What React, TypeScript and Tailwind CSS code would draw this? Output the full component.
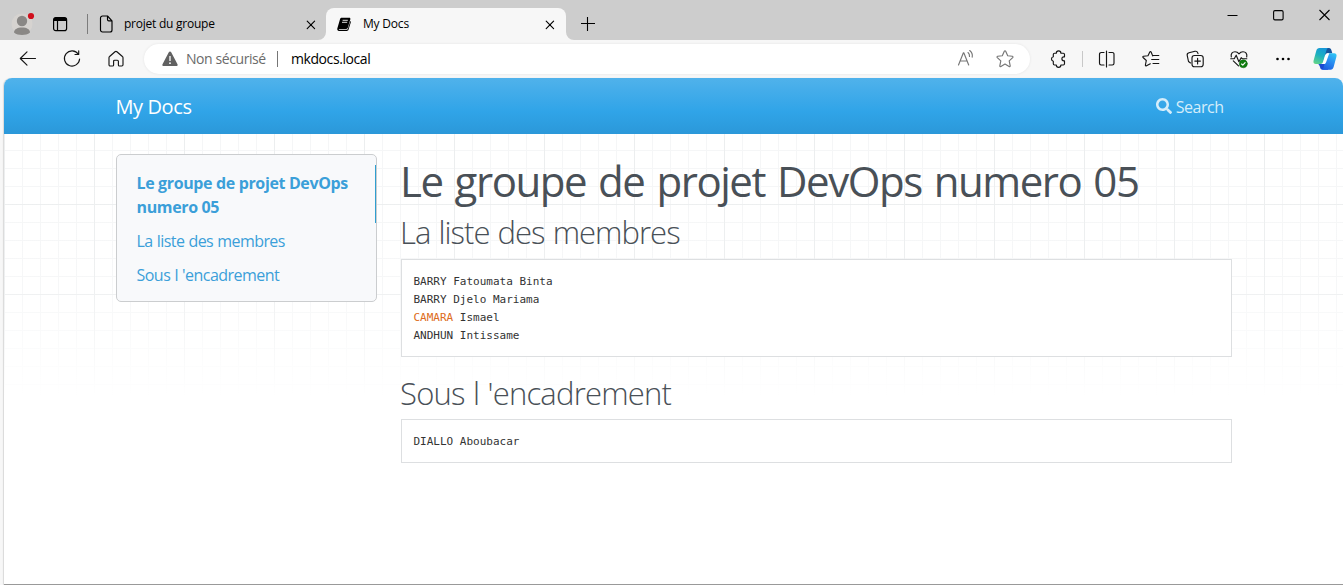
import React from "react";
import { FaSearch } from "react-icons/fa";

type IconProps = { className?: string; children: React.ReactNode; size?: number };

function Stroke({ className = "", children, size = 20 }: IconProps) {
  return (
    <svg
      width={size}
      height={size}
      viewBox={`0 0 ${size} ${size}`}
      fill="none"
      stroke="currentColor"
      strokeWidth="1.15"
      strokeLinecap="round"
      strokeLinejoin="round"
      className={`block shrink-0 ${className}`}
    >
      {children}
    </svg>
  );
}

const CloseIcon = ({ className = "" }: { className?: string }) => (
  <Stroke size={10} className={className}>
    <path d="M1.200 1.200l7.400 7.400M8.600 1.200L1.200 8.600" />
  </Stroke>
);

function TitleBar() {
  return (
    <header className="flex h-10 shrink-0 bg-[#cdcdcd]">
      <svg width="24" height="24" viewBox="0 0 24 24" className="ml-[11px] mt-3 block shrink-0">
        <circle cx="11" cy="12" r="10.5" fill="#d6d3d0" />
        <circle cx="11" cy="9" r="5.2" fill="#8a8886" />
        <path d="M3 20.5c0-3 3-5 8-5s8 2 8 5c-2 1.800-5 2.500-8 2.500s-6-.7-8-2.500z" fill="#8a8886" />
        <circle cx="20" cy="4" r="3.100" fill="#d00f1c" />
      </svg>
      <svg width="16" height="16" viewBox="0 0 16 16" className="ml-[17px] mt-4 block shrink-0">
        <rect x="1.600" y="1.600" width="13" height="13" rx="2.200" fill="none" stroke="#000" strokeWidth="1.200" />
        <path d="M1.500 5V3.500a2 2 0 0 1 2-2h9a2 2 0 0 1 2 2V5z" fill="#000" />
        <path d="M5.500 5v9.500" stroke="#000" strokeWidth="1.200" />
      </svg>
      <div className="ml-[19px] mt-[14px] h-5 w-px shrink-0 bg-[#7c7c7c]" />
      <div className="flex h-full w-[238px] shrink-0 items-start">
        <svg width="14" height="18" viewBox="0 0 14 18" fill="none" stroke="#000" strokeWidth="1.150" strokeLinejoin="round" className="ml-[11px] mt-[15px] block shrink-0">
          <path d="M1.500 3a2 2 0 0 1 2-2h5L13 5.800V15a2 2 0 0 1-2 2H3.500a2 2 0 0 1-2-2z" />
          <path d="M8.500 1v3.500a1.300 1.300 0 0 0 1.300 1.300H13" />
        </svg>
        <span className="ml-[11px] mt-[15px] w-[182px] whitespace-nowrap text-[12px] leading-[18px] tracking-[-0.24px] text-black">projet du groupe</span>
        <CloseIcon className="mt-[20px]" />
      </div>
      <div className="relative mt-2 flex h-8 w-[240px] shrink-0 items-start rounded-t-lg bg-[#f7f7f7]">
        <svg width="8" height="8" viewBox="0 0 8 8" className="absolute -left-2 bottom-0 block">
          <path d="M8 0v8H0a8 8 0 0 0 8-8z" fill="#f7f7f7" />
        </svg>
        <svg width="8" height="8" viewBox="0 0 8 8" className="absolute -right-2 bottom-0 block">
          <path d="M0 0v8h8a8 8 0 0 1-8-8z" fill="#f7f7f7" />
        </svg>
        <svg width="14" height="14" viewBox="0 0 14 14" className="ml-[11px] mt-[9px] block shrink-0">
          <path d="M4.800.8h7.400c1 0 1.400.7 1.100 1.600l-2.500 8.400c-.2.700-.8 1.100-1.500 1.100H2.200c-.5 0-.5.800 0 .8h7.500c.6 0 1-.3 1.200-.9l2.400-7.700c.7.400.6.900.4 1.600l-2.200 7c-.2.700-.9 1.200-1.600 1.200H2C.8 13.900 0 13 .3 11.600L3 2.300C3.200 1.300 3.800.8 4.800.8z" fill="#000" />
          <path d="M5.600 3.300h5.200M5 5.300h5.200" stroke="#f7f7f7" strokeWidth=".9" />
        </svg>
        <span className="ml-3 mt-[7px] w-[182px] whitespace-nowrap text-[12px] leading-[18px] tracking-[-0.2px] text-black">My Docs</span>
        <CloseIcon className="mt-[12px]" />
      </div>
      <svg width="14" height="14" viewBox="0 0 14 14" stroke="#000" strokeWidth="1.100" className="ml-[15px] mt-[17px] block shrink-0">
        <path d="M0 6.500h14M6.500 0v14" />
      </svg>
      <div className="ml-auto mr-[13px] mt-[9px] flex gap-[35px]">
        <svg width="11" height="12" viewBox="0 0 11 12" stroke="#000" className="block"><path d="M.5 6.500h10" /></svg>
        <svg width="11" height="12" viewBox="0 0 11 12" fill="none" stroke="#000" strokeWidth="1.100" className="block"><rect x=".6" y="1.600" width="9.500" height="9.300" rx="1.300" /></svg>
        <svg width="11" height="12" viewBox="0 0 11 12" stroke="#000" strokeWidth="1.100" className="block"><path d="M.5 1l10 10M10.500 1l-10 10" /></svg>
      </div>
    </header>
  );
}

function CopilotLogo() {
  return (
    <svg width="24" height="24" viewBox="0 0 24 24" className="block shrink-0">
      <defs>
        <linearGradient id="cpA" x1="0.600" y1="0" x2="0.200" y2="1">
          <stop offset="0" stopColor="#1798d8" />
          <stop offset=".45" stopColor="#1cb0c0" />
          <stop offset="1" stopColor="#62d488" />
        </linearGradient>
        <linearGradient id="cpB" x1="0.800" y1="0" x2="0.300" y2="1">
          <stop offset="0" stopColor="#2fc5f5" />
          <stop offset=".5" stopColor="#2a8cf0" />
          <stop offset="1" stopColor="#1d5fe0" />
        </linearGradient>
      </defs>
      <path d="M12 1h4c1.500 0 2 1 2.500 2.500l.8 2.800h-4c-2 0-3 1-3.500 2.600z" fill="#17549c" />
      <path d="M5 17h5.500c1.500 0 2.200-.7 2.600-2l1-3 1 10.700H9.500c-1.300 0-1.900-.7-2.200-1.700C6.700 19 6.200 17.500 5 17z" fill="#1b4ad2" />
      <path d="M6.500 1h9c-1 0-1.600.8-2 2.200L10 15c-.4 1.300-1.200 2-2.500 2H3C.8 17 0 15.600.6 13.500l2.700-9.700C3.800 2 4.800 1 6.500 1z" fill="url(#cpA)" />
      <path d="M17.500 22.700h-9c1 0 1.600-.8 2-2.200L14 8.500c.4-1.400 1.200-2.200 2.500-2.200H21c2.200 0 3 1.500 2.400 3.500l-2.700 10c-.5 1.900-1.500 2.900-3.200 2.900z" fill="url(#cpB)" />
      <path d="M12.700 7.800c.5-1.100 1.200-1.500 2.300-1.500h1.300l-3.200 8.900c-.5 1.300-1.200 1.800-2.500 1.800H8.800c.8-.3 1.100-.9 1.400-1.800z" fill="#fff" />
    </svg>
  );
}

function Toolbar() {
  return (
    <div className="flex h-[38px] shrink-0 items-center bg-[#f7f7f7] text-[#151515]">
      <Stroke className="ml-[18px]">
        <path d="M17.500 9.500H2.800M9 2.800L2.300 9.500 9 16.200" />
      </Stroke>
      <Stroke className="ml-6">
        <path d="M16.400 5.300A7.600 7.600 0 1 0 17.600 10M16.700 1.800v3.700H13" />
      </Stroke>
      <Stroke className="ml-6">
        <path d="M3 8.700c0-.5.200-.9.600-1.200L9 2.700c.6-.5 1.300-.5 1.900 0l5.500 4.800c.4.300.6.700.6 1.200v7.100c0 .7-.5 1.200-1.200 1.200h-2.300c-.6 0-1.100-.5-1.100-1.100v-3.600c0-.6-.5-1.100-1.100-1.100H8.700c-.6 0-1.100.5-1.100 1.100v3.600c0 .6-.5 1.100-1.100 1.100H4.200c-.7 0-1.200-.5-1.200-1.200z" />
      </Stroke>
      <div className="ml-[18px] flex h-[30px] w-[886px] shrink-0 items-center rounded-full bg-white shadow-[0_0_3px_rgba(0,0,0,0.08)]">
        <svg width="16" height="16" viewBox="0 0 16 16" className="ml-[18px] block shrink-0">
          <path d="M6.800 1.300c.5-1 1.900-1 2.400 0l6.300 11.900c.5.900-.1 1.900-1.100 1.900H1.600c-1 0-1.600-1-1.100-1.900z" fill="#616161" />
          <path d="M8 5v5" stroke="#fff" strokeWidth="1.300" />
          <circle cx="8" cy="12.200" r=".9" fill="#fff" />
        </svg>
        <span className="ml-2 w-[91px] whitespace-nowrap text-[14px] leading-5 tracking-[-0.42px] text-[#6b6b6b]">Non sécurisé</span>
        <div className="h-4 w-px bg-[#767676]" />
        <span className="ml-[13px] whitespace-nowrap text-[14px] leading-5 tracking-[-0.42px] text-black">mkdocs.local</span>
        <Stroke className="ml-auto text-[#767676]">
          <path d="M2.500 16L7.400 3.800h.4L12.700 16M4.200 12h6.800M12 3.500c1.300 1 1.700 2.300 1.500 4M13.700 1.500c2.200 1.700 3 4 2.500 6.700" />
        </Stroke>
        <Stroke className="ml-[19px] mr-[15px] text-[#767676]">
          <path d="M9.300 2.300c.3-.6 1.100-.6 1.400 0l2 4.500 4.600.5c.7.100.9.900.4 1.400l-3.500 3.200 1 4.900c.1.600-.5 1.100-1.100.8L10 15.100l-4.100 2.500c-.6.300-1.200-.2-1.100-.8l1-4.900-3.500-3.200c-.5-.5-.3-1.300.4-1.400l4.600-.5z" />
        </Stroke>
      </div>
      <Stroke className="ml-[19px]">
        <path d="M5.500 4.200h1.800a2.300 2.300 0 0 1 4.600 0h2.400c.7 0 1.200.5 1.200 1.200v2.400h-.6a2 2 0 0 0 0 4h.6v3c0 .7-.5 1.200-1.200 1.200h-2.400a2.300 2.300 0 0 1-4.600 0H5.500c-.7 0-1.200-.5-1.200-1.200v-2.500a2.300 2.300 0 0 1 0-4.500V5.400c0-.7.500-1.200 1.200-1.200z" />
      </Stroke>
      <div className="ml-[13px] h-4 w-px bg-[#c8c8c8]" />
      <Stroke className="ml-[14px]">
        <path d="M7 3.500H4.200A1.700 1.700 0 0 0 2.500 5.200v9.100A1.700 1.700 0 0 0 4.200 16H7M12 3.500h3.300a1.700 1.700 0 0 1 1.700 1.700v9.100a1.700 1.700 0 0 1-1.700 1.700H12M9.500 2v16" />
      </Stroke>
      <Stroke className="ml-6">
        <path d="M11.700 6.900L10.100 3c-.3-.6-1-.6-1.300 0L7 6.700l-4.500.5c-.7.100-.9.800-.4 1.300l3.200 3-.9 4.500c-.1.700.5 1.100 1.100.8l3.800-2M12 6.500h5.800M10.700 10.500h7.100M12 14.500h5.800" />
      </Stroke>
      <Stroke className="ml-6">
        <rect x="7" y="6.500" width="11.200" height="11.200" rx="2.500" />
        <path d="M12.600 9.300v5.600M9.800 12.100h5.600M5.500 14l-2-1.500L2.200 6.300C2 5 2.700 4 4 3.700l6-1.400c1.300-.3 2.300.3 2.700 1.500l.3.800" />
      </Stroke>
      <Stroke className="ml-6">
        <path d="M2.300 8C1.500 4.500 3.400 2.700 6 2.700c1.700 0 3 .8 4 2.200 1-1.400 2.300-2.200 4-2.200 2.600 0 4.500 1.800 3.700 5.300M1.700 9.700h3.500l2-3.500 2.700 6.500 2.300-4 1 1h4.600M4.300 11.800l5.200 5" />
        <circle cx="14.300" cy="14.800" r="4" fill="#107c10" stroke="#0b6b0b" strokeWidth=".5" />
        <path d="M12.600 15l1.200 1.100 2.300-2.400" stroke="#fff" />
      </Stroke>
      <svg width="20" height="20" viewBox="0 0 20 20" className="ml-6 block shrink-0">
        <circle cx="4.500" cy="10" r="1.300" />
        <circle cx="10" cy="10" r="1.300" />
        <circle cx="15.500" cy="10" r="1.300" />
      </svg>
      <div className="ml-5"><CopilotLogo /></div>
    </div>
  );
}

function CodeBlock({ children }: { children: React.ReactNode }) {
  return (
    <pre className="border border-[#dddfe1] bg-white px-[11.500px] pb-[11px] pt-[13px] font-['DejaVu_Sans_Mono',monospace] text-[11px] leading-[18px] text-[#333]">
      {children}
    </pre>
  );
}

function Page() {
  return (
    <div className="ml-1 flex min-h-0 flex-1 flex-col overflow-hidden rounded-t-lg border-b border-[#999] bg-white shadow-[-1px_0_1px_rgba(0,0,0,0.12)]">
      <nav className="flex h-14 shrink-0 items-center bg-[linear-gradient(#50b2eb,#30a4e8_60%,#2b98d9)] pl-[111.500px] pr-[119.500px] pt-0.5 text-white">
        <span className="whitespace-nowrap text-[20px] leading-7 tracking-[-0.4px]">My Docs</span>
        <span className="ml-auto flex items-center gap-1 text-[#d5edfa]">
          <FaSearch className="-mt-0.5 size-4" />
          <span className="whitespace-nowrap text-[16px] leading-6 tracking-[-0.5px]">Search</span>
        </span>
      </nav>
      <div className="min-h-0 flex-1 bg-[linear-gradient(rgba(255,255,255,0)_0,rgba(255,255,255,0.1)_150px,#fff_262px),linear-gradient(90deg,#eceeef_1px,transparent_1px),linear-gradient(#eceeef_1px,transparent_1px),linear-gradient(90deg,#f5f6f7_1px,transparent_1px),linear-gradient(#f5f6f7_1px,transparent_1px)] bg-[size:100%_100%,90px_90px,90px_90px,18px_18px,18px_18px] bg-[position:0_0,0_0,0_70px,0_0,0_16px]">
        <div className="flex items-start gap-6 pl-28 pr-[111px] pt-5">
          <aside className="h-[148px] w-[261px] shrink-0 rounded-[5px] border border-[#cbcdcf] bg-[#f8f9fb] py-[10px] text-[16px] leading-6 text-[#3b9fd9]">
            <div className="flex h-[58px] whitespace-nowrap pl-[19.500px] font-bold tracking-[-0.36px]">
              <p className="flex-1 pt-[5.500px]">Le groupe de projet DevOps<br />numero 05</p>
              <div className="w-px shrink-0 bg-[#2f9fd0]" />
            </div>
            <div className="whitespace-nowrap pb-1 pl-[19.500px] pt-[6px] tracking-[-0.560px] [word-spacing:0.500px]">La liste des membres</div>
            <div className="whitespace-nowrap pb-1 pl-[19.500px] pt-[6px] tracking-[-0.520px] [word-spacing:0.500px]">Sous l 'encadrement</div>
          </aside>
          <main className="min-w-0 flex-1">
            <h1 className="-ml-px h-[59px] whitespace-nowrap text-[42px] leading-[53px] tracking-[-1.450px] [word-spacing:2.500px] text-[#495057]">Le groupe de projet DevOps numero 05</h1>
            <h2 className="-ml-px h-[46px] whitespace-nowrap text-[31px] font-light leading-[39px] tracking-[-0.970px] [word-spacing:1px] text-[#495057]">La liste des membres</h2>
            <CodeBlock>
              BARRY Fatoumata Binta{"\n"}BARRY Djelo Mariama{"\n"}<span className="text-[#dd6b20]">CAMARA</span> Ismael{"\n"}ANDHUN Intissame
            </CodeBlock>
            <h2 className="-ml-px mt-[17px] h-[45px] whitespace-nowrap text-[31px] font-light leading-[39px] tracking-[-0.780px] [word-spacing:1px] text-[#495057]">Sous l 'encadrement</h2>
            <CodeBlock>DIALLO Aboubacar</CodeBlock>
          </main>
        </div>
      </div>
    </div>
  );
}

export default function App() {
  return (
    <div className="flex h-[585px] w-[1343px] flex-col overflow-hidden bg-[#f7f7f7] font-['Open_Sans','Noto_Sans',sans-serif]">
      <TitleBar />
      <Toolbar />
      <Page />
    </div>
  );
}
